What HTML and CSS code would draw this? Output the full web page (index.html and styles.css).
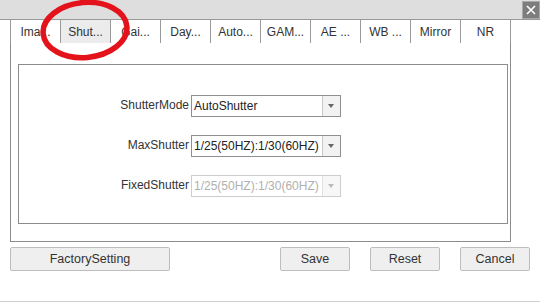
FILE: index.html
```html
<!DOCTYPE html>
<html lang="en">
  <head>
    <meta charset="UTF-8" />
    <title>Camera settings</title>
    <link rel="stylesheet" href="styles.css">
  </head>
  <body>
    <div class="dialog">
      <div class="titlebar">
        <div class="close">
          <svg width="12" height="12" viewBox="0 0 12 12">
            <path d="M2 2 L10 10 M10 2 L2 10" stroke="#fff" stroke-width="1.6" />
          </svg>
        </div>
      </div>

      <div class="tabs">
        <div class="tab">Ima...</div>
        <div class="tab active">Shut...</div>
        <div class="tab">Gai...</div>
        <div class="tab">Day...</div>
        <div class="tab">Auto...</div>
        <div class="tab">GAM...</div>
        <div class="tab">AE ...</div>
        <div class="tab">WB ...</div>
        <div class="tab">Mirror</div>
        <div class="tab last">NR</div>
      </div>

      <div class="panel">
        <div class="group">
          <div class="form">
            <label>ShutterMode</label>
            <div class="select">
              <span class="value">AutoShutter</span>
              <span class="arrow"></span>
            </div>

            <label>MaxShutter</label>
            <div class="select">
              <span class="value">1/25(50HZ):1/30(60HZ)</span>
              <span class="arrow"></span>
            </div>

            <label>FixedShutter</label>
            <div class="select disabled">
              <span class="value">1/25(50HZ):1/30(60HZ)</span>
              <span class="arrow"></span>
            </div>
          </div>
        </div>
      </div>

      <div class="buttons">
        <button class="btn wide">FactorySetting</button>
        <div class="right">
          <button class="btn">Save</button>
          <button class="btn">Reset</button>
          <button class="btn">Cancel</button>
        </div>
      </div>

      <!-- red marker drawn over the tabs -->
      <svg class="marker" width="96" height="66" viewBox="0 0 96 66">
        <ellipse cx="47" cy="31" rx="42" ry="27.5" fill="none" stroke="#e3121b" stroke-width="5.5" transform="rotate(-5 47 31)" />
      </svg>
    </div>
  </body>
</html>
```

FILE: styles.css
```css
* {
  box-sizing: border-box;
}
body {
  margin: 0;
  background: #fff;
  font-family: 'Liberation Sans', Arial, sans-serif;
  font-size: 12px;
  color: #333;
}
.dialog {
  position: relative;
  width: 540px;
  height: 302px;
  border-bottom: 1px solid #cfcfcf;
}
.titlebar {
  height: 20px;
  background: #dedede;
  border-bottom: 1px solid #9a9a9a;
  display: flex;
  justify-content: flex-end;
  padding-top: 1px;
}
.close {
  width: 18px;
  height: 18px;
  background: #7d7d7d;
  border: 1px solid #a8a8a8;
  display: flex;
  align-items: center;
  justify-content: center;
}
.tabs {
  display: flex;
  margin-left: 10px;
  height: 23px;
}
.tab {
  width: 50px;
  height: 23px;
  border-left: 1px solid #9a9a9a;
  text-align: center;
  line-height: 23px;
  padding-top: 1px;
  background: #fff;
}
.tab.last {
  width: 51px;
  border-right: 1px solid #9a9a9a;
}
.tab.active {
  background: #ececec;
}
.panel {
  margin-left: 10px;
  width: 501px;
  height: 199px;
  border: 1px solid #8c8c8c;
  border-top: none;
  padding: 21px 3px 0 7px;
}
.group {
  width: 490px;
  height: 160px;
  border: 1px solid #8c8c8c;
  padding-top: 30px;
}
.form {
  display: grid;
  grid-template-columns: 170px 150px;
  column-gap: 2px;
  row-gap: 18px;
}
.form label {
  text-align: right;
  padding-top: 2px;
  line-height: 16px;
}
.select {
  display: flex;
  height: 22px;
  border: 1px solid #8f8f8f;
  background: #fff;
  color: #222;
}
.select .value {
  flex: 1;
  overflow: hidden;
  white-space: nowrap;
  padding-left: 2px;
  line-height: 21px;
  font-size: 12px;
}
.select .arrow {
  width: 18px;
  border-left: 1px solid #c8c8c8;
  background: #f2f2f2;
  position: relative;
}
.select .arrow::after {
  content: "";
  position: absolute;
  left: 5px;
  top: 8px;
  border-left: 3.5px solid transparent;
  border-right: 3.5px solid transparent;
  border-top: 4px solid #666;
}
.select.disabled {
  border-color: #cdcdcd;
  color: #b0b0b0;
}
.select.disabled .arrow {
  border-left-color: #e2e2e2;
  background: #f7f7f7;
}
.select.disabled .arrow::after {
  border-top-color: #bbb;
}
.buttons {
  display: flex;
  justify-content: space-between;
  padding: 5px 10px 0 10px;
}
.right {
  display: flex;
  gap: 20px;
}
.btn {
  width: 70px;
  height: 24px;
  background: #efefef;
  border: 1px solid #bdbdbd;
  border-radius: 2px;
  font-family: 'Liberation Sans', Arial, sans-serif;
  font-size: 12.5px;
  color: #333;
  padding: 0;
}
.btn.wide {
  width: 160px;
}
.marker {
  position: absolute;
  left: 38px;
  top: -1px;
}
```
